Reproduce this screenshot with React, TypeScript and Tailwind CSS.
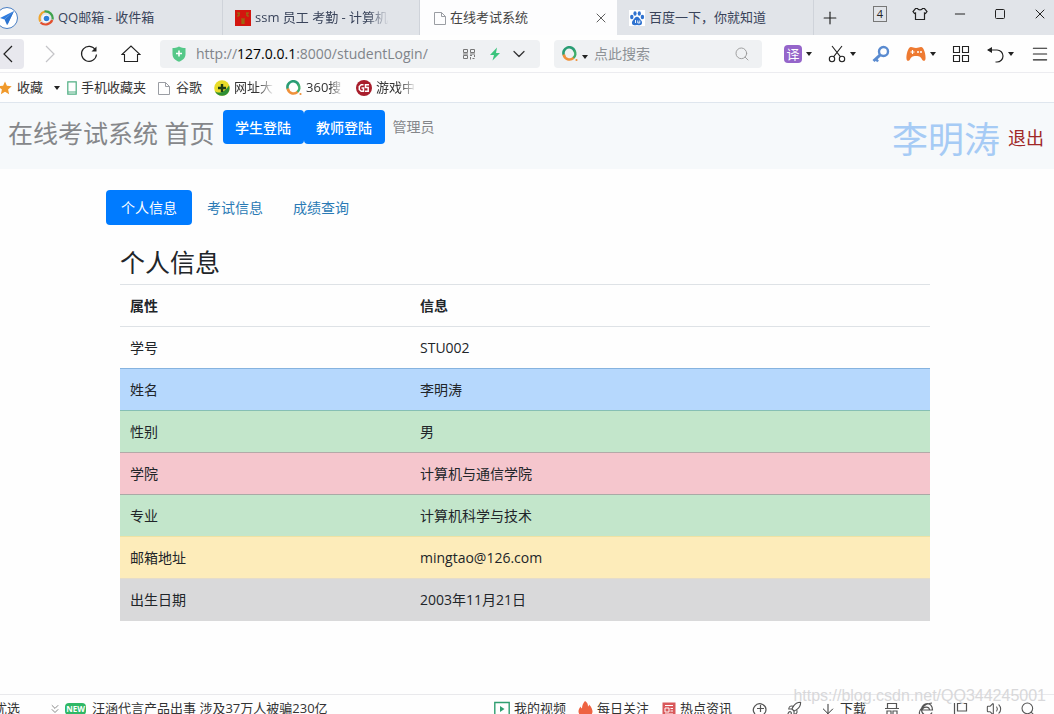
import { useState } from 'react';
import type { ReactNode } from 'react';
import { ChevronDown, ChevronsDown, Minus, Plus, Search, Square, X, Rocket, ArrowDown, Volume2, Menu } from 'lucide-react';

const rows = [
  { name: '学号', value: 'STU002', style: 'border-[#dee2e6]' },
  { name: '姓名', value: '李明涛', style: 'bg-[#b6d8fd] border-[#86b3df]' },
  { name: '性别', value: '男', style: 'bg-[#c3e6cb] border-[#86bfb4]' },
  { name: '学院', value: '计算机与通信学院', style: 'bg-[#f5c6cd] border-[#b3aaa8]' },
  { name: '专业', value: '计算机科学与技术', style: 'bg-[#c3e6cb] border-[#aaa9a6]' },
  { name: '邮箱地址', value: 'mingtao@126.com', style: 'bg-[#fdecba] border-[#eee2a4]' },
  { name: '出生日期', value: '2003年11月21日', style: 'bg-[#d9d9da] border-[#e4dccb]' },
];

const tabs = ['个人信息', '考试信息', '成绩查询'];

function Caret() {
  return (
    <svg className="w-1.5 h-1 shrink-0" viewBox="0 0 6 4" fill="#222">
      <path d="M0 0h6L3 4z" />
    </svg>
  );
}

function PageIcon() {
  return (
    <svg className="w-3 h-4 shrink-0" viewBox="0 0 12 16" fill="none" stroke="#9a9da3">
      <path d="M.5 2.500h7l4 4v8H.5zM7.500 2.500v4h4" />
    </svg>
  );
}

function PlaneLogo() {
  return (
    <svg className="w-6 h-6 shrink-0 -ml-1" viewBox="0 0 24 24">
      <circle cx="11" cy="12" r="10.500" fill="#fff" stroke="#4a7fc4" />
      <path d="M18 5 4 12l4.500 1.500zM18 5l-8 9 1.500 5z" fill="#2f7de0" />
      <path d="M18 5 8.500 13.500l2.500 5.500z" fill="#2e74cf" />
    </svg>
  );
}

function MailIcon() {
  return (
    <svg className="w-4 h-4 shrink-0" viewBox="0 0 16 16" fill="none" strokeWidth="2.200">
      <path d="M2.200 11.500C.5 7 2.500 2.500 7 1.500" stroke="#f0a52e" />
      <path d="M6.500 1.500C11.500 1 15.500 5 14.500 9.500" stroke="#3fa34d" />
      <path d="M14.300 10C12 15 6 15.800 2.500 12.500" stroke="#e2502f" />
      <circle cx="8" cy="8.500" r="3.800" fill="#fff" />
      <circle cx="8.500" cy="8.500" r="2.800" fill="#2f7fd8" />
    </svg>
  );
}

function RedSquareIcon() {
  return (
    <svg className="w-4 h-4 shrink-0" viewBox="0 0 16 16">
      <path d="M0 0h16v16H0z" fill="#d3160f" />
      <path d="M2 3h3M4 3v3M11 3h3M12 3v3M2 6h2M12 6h2M6 9h4M8 9v5M6 11h4M6 13h4" stroke="#8f7a12" strokeWidth="1.200" />
    </svg>
  );
}

function PawIcon() {
  return (
    <svg className="w-4 h-4 shrink-0" viewBox="0 0 16 16">
      <path d="M0 0h16v16H0z" fill="#fff" />
      <g fill="#2f72cf">
        <ellipse cx="2.800" cy="7" rx="1.700" ry="2.200" />
        <ellipse cx="6" cy="3.500" rx="1.600" ry="2.300" />
        <ellipse cx="10.300" cy="3.500" rx="1.600" ry="2.300" />
        <ellipse cx="13.400" cy="7" rx="1.700" ry="2.200" />
        <path d="M8 6.800c2 0 2.500 2 4 3.400 1.800 1.800 1.200 5-1.400 5-1 0-1.600-.3-2.600-.3s-1.600.3-2.600.3c-2.600 0-3.200-3.200-1.400-5C5.500 8.800 6 6.800 8 6.800z" />
      </g>
      <path d="M6.500 10v3M8.800 10.500v2.500h2v-2.500" fill="none" stroke="#fff" strokeWidth=".9" />
    </svg>
  );
}

function RingIcon() {
  return (
    <svg className="w-4 h-4 shrink-0" viewBox="0 0 16 16" fill="none" strokeWidth="2.600">
      <path d="M1.800 9A5.700 5.700 0 0 1 12.600 5" stroke="#2a9d74" />
      <path d="M12.300 4.400A5.700 5.700 0 0 1 11 12.200" stroke="#3fae6a" />
      <path d="M1.800 8.500A5.700 5.700 0 0 0 11.500 11.800" stroke="#f0913a" />
      <circle cx="14.500" cy="14" r="1.100" fill="#f0913a" />
    </svg>
  );
}

function NavIcon() {
  return (
    <svg className="w-4 h-4 shrink-0" viewBox="0 0 16 16">
      <circle cx="8" cy="8" r="7.800" fill="#e8dc28" />
      <path d="M.8 11C4 14 10 13 15 5.500c1.500 4-.5 10-6.500 10.300C5 16 2 14 .8 11z" fill="#2f8f35" />
      <path d="M8 4v8M4 8h8" stroke="#1c3d16" strokeWidth="2.400" />
    </svg>
  );
}

function GameSiteIcon() {
  return (
    <svg className="w-4 h-4 shrink-0" viewBox="0 0 16 16" fill="none" stroke="#fff" strokeWidth="1.500">
      <circle cx="8" cy="8" r="8" fill="#a81e2c" stroke="none" />
      <path d="M7.500 4.800H5.200L3.300 6.500v3l1.900 1.700h2.300V8H5.500M13 4.800H9.500v2.700h2.700v3.700H9" />
    </svg>
  );
}

function ShieldIcon() {
  return (
    <svg className="w-4 h-4 shrink-0" viewBox="0 0 16 16">
      <path d="M8 .5c2 1 4.500 1.500 6.500 1.500v6c0 4-3 6.500-6.500 7.700C4.500 14.500 1.500 12 1.500 8V2C3.500 2 6 1.500 8 .5z" fill="#55c888" />
      <path d="M8 4.500v6M5 7.500h6" stroke="#fff" strokeWidth="1.600" />
    </svg>
  );
}

function ArrowIcon({ d, color }: { d: string; color: string }) {
  return (
    <svg className="w-3 h-[18px]" viewBox="0 0 12 18" fill="none" stroke={color} strokeWidth="1.200">
      <path d={d} />
    </svg>
  );
}

function ReloadIcon() {
  return (
    <svg className="w-[18px] h-[18px]" viewBox="0 0 18 18" fill="none" stroke="#222" strokeWidth="1.200">
      <path d="M15.500 5A7.500 7.500 0 1 0 16.500 9.500" />
      <path d="M16.500 1.500v5h-5z" fill="#222" stroke="none" />
    </svg>
  );
}

function HomeIcon() {
  return (
    <svg className="w-5 h-5" viewBox="0 0 20 20" fill="none" stroke="#222" strokeWidth="1.100">
      <path d="M1 10.500 10 2l9 8.500h-2.500V17.500h-13v-7z" />
    </svg>
  );
}

function QrIcon() {
  return (
    <svg className="w-3 h-3 shrink-0" viewBox="0 0 12 12" fill="none" stroke="#777">
      <path d="M.5 1.500h4v3h-4zM7.500 1.500h4v3h-4zM.5 7.500h4v3h-4zM7 7.500h2M11.500 7v2M7.500 9v2.500M9.500 10.500h2M0 6h5M7 6h5" />
    </svg>
  );
}

function BoltIcon() {
  return (
    <svg className="w-3 h-3.5 shrink-0" viewBox="0 0 12 14">
      <path d="M8 .5 1 8h4l-1.500 5.500L11 6H7z" fill="#3bc47c" />
    </svg>
  );
}

function ShirtIcon() {
  return (
    <svg className="w-4 h-4" viewBox="0 0 16 16" fill="none" stroke="#222" strokeWidth="1.200">
      <path d="M5.500 2.500c.5 1.800 4.500 1.800 5 0h2L15 5.500 13.500 7.500l-1-.5v6.500h-9V7l-1 .5L1 5.500l2.500-3z" />
    </svg>
  );
}

function ScissorsIcon() {
  return (
    <svg className="w-[18px] h-[18px]" viewBox="0 0 18 18" fill="none" stroke="#222" strokeWidth="1.100">
      <circle cx="4" cy="14" r="2.700" />
      <circle cx="14" cy="14" r="2.700" />
      <path d="M4 1l8.500 10.800M14 1 5.500 11.800" />
    </svg>
  );
}

function KeyIcon() {
  return (
    <svg className="w-[18px] h-[18px]" viewBox="0 0 18 18" fill="none" stroke="#5a8bd0">
      <circle cx="11.500" cy="6.500" r="4.500" strokeWidth="2.400" />
      <path d="M8 10.200 1.500 16" strokeWidth="3" />
      <path d="m3.500 13.500 2.500 3" strokeWidth="2.400" />
    </svg>
  );
}

function GamepadIcon() {
  return (
    <svg className="w-5 h-4" viewBox="0 0 20 16">
      <path d="M5 1c2 0 2.500 1 5 1s3-1 5-1c3 0 5 8 4.500 12-.3 2.300-2.500 2.500-3.500.5-1-2-2-3.500-6-3.500s-5 1.500-6 3.500c-1 2-3.200 1.800-3.500-.5C0 9 2 1 5 1z" fill="#ee7a31" />
      <path d="M6.500 4v4M4.500 6h4" stroke="#fff" strokeWidth="1.200" />
      <circle cx="12" cy="6" r="1" fill="#fff" />
      <circle cx="15" cy="6" r="1" fill="#fff" />
    </svg>
  );
}

function GridIcon() {
  return (
    <svg className="w-[18px] h-[18px]" viewBox="0 0 18 18" fill="none" stroke="#222" strokeWidth="1.100">
      <path d="M1.500 1.500h6v6h-6zM10.500 1.500h6v6h-6zM1.500 10.500h6v6h-6zM10.500 10.500h6v6h-6z" />
    </svg>
  );
}

function UndoIcon() {
  return (
    <svg className="w-[18px] h-[18px]" viewBox="0 0 18 18" fill="none" stroke="#222" strokeWidth="1.200">
      <path d="M2 5h9a6 6 0 0 1 0 12H9.500" />
      <path d="M1 5 6 2v6z" fill="#222" stroke="none" />
    </svg>
  );
}

function FooterIcon({ d }: { d: string }) {
  return (
    <svg className="w-4 h-4" viewBox="0 0 16 16" fill="none" stroke="#555" strokeWidth="1.200">
      <path d={d} />
    </svg>
  );
}

function BrowserTab({ icon, title, active, faded }: { icon: ReactNode; title: string; active?: boolean; faded?: boolean }) {
  return (
    <div className={`flex items-center w-[197px] min-w-0 h-full pr-3 text-[13px] ${active ? 'bg-[#fdfdfe] pl-3.5 text-[#444]' : 'border-r border-[#cfd3da] pl-3 text-[#39435a]'}`}>
      {icon}
      <span className={`ml-1 whitespace-nowrap overflow-hidden ${faded ? 'w-[134px] [mask-image:linear-gradient(to_right,black_84%,transparent)]' : ''}`}>{title}</span>
      {active && (
        <button aria-label="关闭标签" className="ml-auto -mr-1">
          <X className="w-4 h-4 text-[#444]" strokeWidth={1.3} />
        </button>
      )}
    </div>
  );
}

function AddressBar() {
  const [editing, setEditing] = useState(false);
  const [url, setUrl] = useState('http://127.0.0.1:8000/studentLogin/');
  const [, scheme, host, rest] = url.match(/^(\w+:\/\/)?([^:/]*)(.*)$/) || [];

  return (
    <div className="flex flex-1 min-w-0 items-center h-7 pl-[11px] pr-[11px] bg-[#eff1f3] rounded">
      <ShieldIcon />
      {editing ? (
        <input
          autoFocus
          aria-label="地址"
          value={url}
          onChange={(e) => setUrl(e.target.value)}
          onBlur={() => setEditing(false)}
          className="flex-1 min-w-0 ml-[9px] text-[14px] bg-transparent outline-none"
        />
      ) : (
        <button onClick={() => setEditing(true)} className="flex-1 min-w-0 ml-[9px] text-left text-[14px] text-[#80848a] whitespace-nowrap overflow-hidden">
          {scheme}<span className="text-black">{host}</span>{rest}
        </button>
      )}
      <div className="flex items-center gap-3.5 shrink-0">
        <QrIcon />
        <BoltIcon />
        <ChevronDown className="w-5 h-5 -ml-1.5 text-[#333]" strokeWidth={1.5} />
      </div>
    </div>
  );
}

function Bookmark({ icon, title, className = '' }: { icon: ReactNode; title: string; className?: string }) {
  return (
    <a href="#" className="flex items-center gap-1 whitespace-nowrap">
      {icon}
      <span className={`overflow-hidden ${className}`}>{title}</span>
    </a>
  );
}

export default function App() {
  const [activeTab, setActiveTab] = useState(tabs[0]);
  const [keyword, setKeyword] = useState('');

  return (
    <div className="relative flex flex-col h-screen overflow-hidden bg-[#fefefe] text-[#212529] font-['Open_Sans','Noto_Sans_CJK_SC',sans-serif]">
      {/* 标签栏 */}
      <div className="flex items-center h-[35px] shrink-0 bg-[#e1e4e9]">
        <div className="w-[26px] shrink-0"><PlaneLogo /></div>
        <BrowserTab icon={<MailIcon />} title="QQ邮箱 - 收件箱" />
        <BrowserTab icon={<RedSquareIcon />} title="ssm 员工 考勤 - 计算机" faded />
        <BrowserTab icon={<PageIcon />} title="在线考试系统" active />
        <BrowserTab icon={<PawIcon />} title="百度一下，你就知道" />
        <button aria-label="新标签" className="ml-1.5">
          <Plus className="w-5 h-5 text-[#222]" strokeWidth={1.4} />
        </button>
        <div className="flex self-start h-7 ml-auto text-[#222]">
          <button className="flex items-center justify-center w-10">
            <span className="w-3.5 h-4 border border-[#777] text-[11px] leading-[14px] text-center">4</span>
          </button>
          <button aria-label="皮肤" className="flex items-center justify-center w-10"><ShirtIcon /></button>
          <button aria-label="最小化" className="flex items-center justify-center w-10"><Minus className="w-4 h-4" strokeWidth={1.5} /></button>
          <button aria-label="最大化" className="flex items-center justify-center w-10"><Square className="w-3 h-3" strokeWidth={2} /></button>
          <button aria-label="关闭" className="flex items-center justify-end w-[34px] pr-1.5"><X className="w-4 h-4" strokeWidth={1.5} /></button>
        </div>
      </div>

      {/* 工具栏 */}
      <div className="flex items-center h-[38px] shrink-0 border-b border-[#ececf0]">
        <div className="flex items-center w-40 shrink-0">
          <button aria-label="后退" className="flex items-center h-[30px] w-6 pl-0.5 bg-[#e8e8ee] rounded-r"><ArrowIcon d="M10 1 2 9l8 8" color="#222" /></button>
          <button aria-label="前进" className="ml-5"><ArrowIcon d="m2 1 8 8-8 8" color="#c4c4c8" /></button>
          <button aria-label="刷新" className="ml-6"><ReloadIcon /></button>
          <button aria-label="主页" className="ml-[23px]"><HomeIcon /></button>
        </div>
        <AddressBar />
        <div className="flex items-center w-[208px] h-7 ml-3.5 pl-2 pr-3 bg-[#eff1f3] rounded shrink-0">
          <RingIcon />
          <span className="ml-1 mr-1.5 mt-1.5 flex"><Caret /></span>
          <input
            type="text"
            aria-label="点此搜索"
            value={keyword}
            onChange={(e) => setKeyword(e.target.value)}
            placeholder="点此搜索"
            className="flex-1 min-w-0 text-[14px] bg-transparent outline-none placeholder:text-[#8d9196]"
          />
          <Search className="w-4 h-4 text-[#999]" strokeWidth={1.4} />
        </div>
        <div className="flex items-center gap-4 w-[292px] pl-[22px] shrink-0">
          <button className="flex items-center gap-1">
            <span className="w-[18px] h-[18px] rounded-sm bg-[#9565ca] text-white text-[13px] leading-[18px] text-center">译</span>
            <Caret />
          </button>
          <button aria-label="截图" className="flex items-center gap-1"><ScissorsIcon /><Caret /></button>
          <button aria-label="密码"><KeyIcon /></button>
          <button aria-label="游戏" className="flex items-center gap-1"><GamepadIcon /><Caret /></button>
          <button aria-label="应用"><GridIcon /></button>
          <button aria-label="恢复" className="flex items-center gap-1"><UndoIcon /><Caret /></button>
          <button aria-label="菜单"><Menu className="w-5 h-5 text-[#222]" strokeWidth={1.3} /></button>
        </div>
      </div>

      {/* 收藏栏 */}
      <div className="flex items-center gap-3 h-[30px] shrink-0 border-b border-[#dfe6ee] text-[13px] text-[#333]">
        <button className="flex items-center whitespace-nowrap">
          <svg className="w-3 h-3.5 mr-[5px]" viewBox="0 0 12 14" fill="#f0992b">
            <path d="m5 .5 1.900 4.300 4.800.5L8.100 8.500l1 4.700L5 10.800.9 13.200l1-4.700L0 7V5.100l3.100-.3z" />
          </svg>
          收藏
          <span className="ml-[11px]"><Caret /></span>
        </button>
        <Bookmark
          icon={
            <svg className="w-2.5 h-3.5 shrink-0 -ml-[5px]" viewBox="0 0 10 14" fill="none" stroke="#4fae82" strokeWidth="1.200">
              <path d="M.8.8h8.400v12.400H.8zM.8 11h8.400" />
            </svg>
          }
          title="手机收藏夹"
        />
        <Bookmark icon={<PageIcon />} title="谷歌" className="ml-0.5" />
        <Bookmark icon={<NavIcon />} title="网址大" className="w-10 [mask-image:linear-gradient(to_right,black_60%,transparent)]" />
        <Bookmark icon={<RingIcon />} title="360搜" className="w-[38px] [mask-image:linear-gradient(to_right,black_60%,transparent)]" />
        <Bookmark icon={<GameSiteIcon />} title="游戏中" className="w-10 [mask-image:linear-gradient(to_right,black_60%,transparent)]" />
      </div>

      <header className="flex items-start h-[66px] shrink-0 pl-2 pr-2.5 pt-[7px] bg-[#f6f9fb] text-[14px]">
        <a href="#" className="pt-1 mr-2 text-[25px] leading-[38px] text-[#85878a] whitespace-nowrap">在线考试系统 首页</a>
        <button className="w-[81px] h-[34px] rounded bg-[#007bff] text-white font-medium">学生登陆</button>
        <button className="w-[81px] h-[34px] rounded bg-[#007bff] text-white font-medium">教师登陆</button>
        <a href="#" className="ml-2 leading-[34px] text-[#85878a]">管理员</a>
        <div className="flex items-center gap-2 ml-auto h-[60px] whitespace-nowrap">
          <span className="text-[36px] leading-[54px] text-[#a6cbf5]">李明涛</span>
          <a href="#" className="pb-1 text-[18px] text-[#a02828]">退出</a>
        </div>
      </header>

      <main className="flex-1 min-h-0 pl-[106px] pr-[124px] pt-[21px] text-[14px]">
        <nav className="flex">
          {tabs.map((tab) => (
            <button
              key={tab}
              onClick={() => setActiveTab(tab)}
              className={`w-[86px] h-[35px] rounded ${tab === activeTab ? 'bg-[#007bff] text-white' : 'text-[#2a7ab5]'}`}
            >
              {tab}
            </button>
          ))}
        </nav>
        <section className="pl-3.5 pt-5">
          <h4 className="text-[25px] leading-[34px] pb-[5px]">{activeTab}</h4>
          <table className="w-full table-fixed border-collapse text-left">
            <thead>
              <tr className="h-[42px] border-y border-[#dee2e6]">
                <th className="w-[290px] px-2.5">属性</th>
                <th className="px-2.5">信息</th>
              </tr>
            </thead>
            <tbody>
              {rows.map((row) => (
                <tr key={row.name} className={`h-[42px] border-t ${row.style}`}>
                  <td className="px-2.5">{row.name}</td>
                  <td className="px-2.5">{row.value}</td>
                </tr>
              ))}
            </tbody>
          </table>
        </section>
      </main>

      {/* 底部状态栏 */}
      <footer className="h-5 shrink-0 overflow-hidden border-t border-[#e9e9ec] text-[13px] text-[#333] whitespace-nowrap">
        <div className="flex items-center h-7">
          <span className="-ml-1.5">优选</span>
          <ChevronsDown className="w-3.5 h-3.5 ml-7 text-[#777]" strokeWidth={1.5} />
          <span className="w-[21px] h-3 ml-[3px] rounded-sm bg-[#2fb866] text-white text-[8px] leading-3 font-bold text-center">NEW</span>
          <a href="#" className="ml-1.5">汪涵代言产品出事 涉及37万人被骗230亿</a>
          <div className="flex items-center gap-[18px] ml-auto pr-[18px] text-[#555]">
            <div className="flex items-center gap-3 pr-0.5 text-[#333]">
              <button className="flex items-center gap-1">
                <svg className="w-4 h-4" viewBox="0 0 16 16" fill="none" stroke="#2f9e70" strokeWidth="1.400">
                  <path d="M.8 1.500h14.400v13H.8z" />
                  <path d="m6 5 4.500 3L6 11z" fill="#2f9e70" stroke="none" />
                </svg>
                我的视频
              </button>
              <button className="flex items-center gap-1">
                <svg className="w-[15px] h-4" viewBox="0 0 15 16" fill="#ee6342">
                  <path d="M7 0c3 2 3 4 3 5.500C11 5 11 4 11 3.500c2.500 2.500 3.500 5 3.500 7C14.500 14 11 16 7.500 16S.5 14 .5 10.500c0-2 1-3.500 2-5C3 6.500 3 7 4 7.500 4 5 5 2 7 0z" />
                </svg>
                每日关注
              </button>
              <button className="flex items-center gap-1">
                <svg className="w-[15px] h-4" viewBox="0 0 15 16" fill="none">
                  <path d="M1.500 1.500h13v14h-13z" fill="#d9595b" />
                  <path d="M4 4.500h8M4 7h4v4H4zM9.500 7.500H12M9.500 10H12M4 13h8" stroke="#fff" />
                </svg>
                热点资讯
              </button>
            </div>
            <button aria-label="医生"><FooterIcon d="M3 13A6.200 6.200 0 1 1 13.500 11L11 14.500M8.500 4v7M5 7.500h7" /></button>
            <button aria-label="加速"><Rocket className="w-4 h-4" strokeWidth={1.6} /></button>
            <button className="flex items-center text-[#333]"><ArrowDown className="w-4 h-4 mr-1" strokeWidth={1.5} />下载</button>
            <button aria-label="无痕"><FooterIcon d="M3.500 7V2.500h9V7M1 7.500h14M3 10h4v4.500H3zM9 10h4v4.500H9z" /></button>
            <button aria-label="内核"><FooterIcon d="M2 14C-.5 10 6 2.500 14 2M4 9h10.500C14.500 0 4 1 3.500 8.500 3.500 15 11.500 16 14 11.500M4.500 8.500C5 5.500 11 5 11.500 8.500" /></button>
            <button aria-label="标记"><FooterIcon d="M2.500 2v13M5.500 2.500h9v7.500h-9z" /></button>
            <button aria-label="声音"><Volume2 className="w-4 h-4" strokeWidth={1.6} /></button>
            <button aria-label="缩放"><Search className="w-4 h-4" strokeWidth={1.6} /></button>
          </div>
        </div>
      </footer>

      <div className="absolute right-2 bottom-2 text-[16px] leading-5 text-[#d8d8da] pointer-events-none font-['Liberation_Sans',sans-serif]">https://blog.csdn.net/QQ344245001</div>
    </div>
  );
}
